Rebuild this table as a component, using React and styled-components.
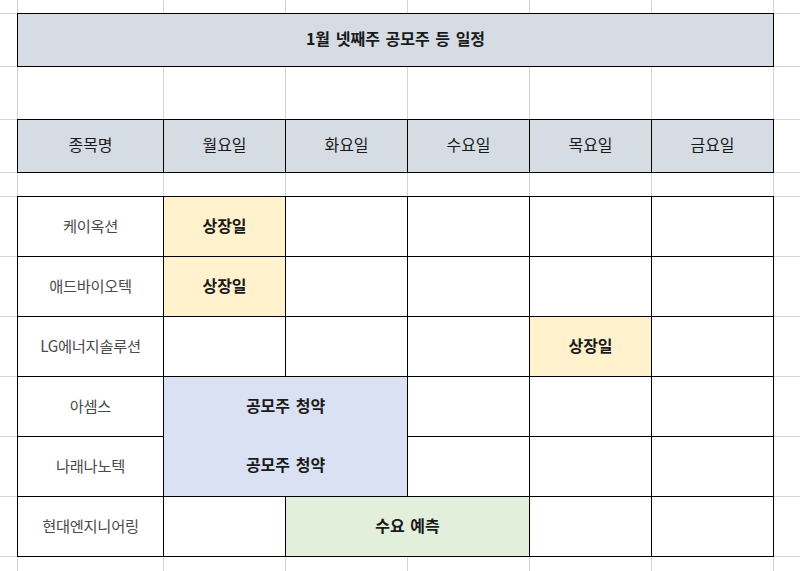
import React from "react";
import styled, { createGlobalStyle } from "styled-components";

const GlobalStyle = createGlobalStyle`
  html, body { margin: 0; padding: 0; background: #fff; }
  body {
    font-family: "Noto Sans CJK KR", "Noto Sans", "Liberation Sans", sans-serif;
    color: #222;
  }
`;

const GRID = "#d4d4d4";

const Sheet = styled.div`
  display: grid;
  grid-template-columns: 17px 146px repeat(5, 122px) 1fr;
  grid-template-rows: 13px repeat(3, 53px) 24px repeat(6, 60px) 1fr;
  width: 100vw;
  height: 100vh;
  overflow: hidden;
`;

const Blank = styled.div`
  grid-column: ${p => p.$c};
  grid-row: ${p => p.$r};
  border-left: ${p => (p.$c > 1 ? `1px solid ${GRID}` : "none")};
  border-top: ${p => (p.$r > 1 ? `1px solid ${GRID}` : "none")};
`;

const Cell = styled.div`
  grid-column: ${p => p.$c} / span ${p => p.$span || 1};
  grid-row: ${p => p.$r} / span ${p => p.$rows || 1};
  border: 1px solid #000;
  margin: 0 -1px -1px 0;
  background: ${p => p.$bg || "#fff"};
  display: flex;
  flex-direction: column;
  z-index: 1;
`;

const sizes = { title: 16, head: 16, event: 16, name: 15.3 };

const Label = styled.div`
  flex: 1;
  display: flex;
  align-items: center;
  justify-content: center;
  font-size: ${p => sizes[p.$kind]}px;
  font-weight: ${p => (p.$kind === "title" || p.$kind === "event" ? 700 : 400)};
  color: ${p => (p.$kind === "name" ? "#4a4a4a" : "#1a1a1a")};
  letter-spacing: ${p => (p.$kind === "name" ? "-0.3px" : "0")};
  word-spacing: ${p => (p.$kind === "title" || p.$kind === "event" ? "2px" : "0")};
  padding-bottom: 4px;
`;

const COLORS = {
  head: "#d6dce4",
  listing: "#fff2cc",
  subscribe: "#dae1f3",
  demand: "#e2efda",
};

const days = ["월요일", "화요일", "수요일", "목요일", "금요일"];
const names = ["케이옥션", "애드바이오텍", "LG에너지솔루션", "아셈스", "나래나노텍", "현대엔지니어링"];

const events = [
  { r: 6, c: 3, span: 1, rows: 1, kind: "listing", labels: ["상장일"] },
  { r: 7, c: 3, span: 1, rows: 1, kind: "listing", labels: ["상장일"] },
  { r: 8, c: 6, span: 1, rows: 1, kind: "listing", labels: ["상장일"] },
  { r: 9, c: 3, span: 2, rows: 2, kind: "subscribe", labels: ["공모주 청약", "공모주 청약"] },
  { r: 11, c: 4, span: 2, rows: 1, kind: "demand", labels: ["수요 예측"] },
];

export default function App() {
  const blanks = [];
  for (let r = 1; r <= 12; r++) {
    for (let c = 1; c <= 8; c++) {
      blanks.push(<Blank key={`b${r}-${c}`} $r={r} $c={c} />);
    }
  }

  const taken = new Set();
  events.forEach(e => {
    for (let r = e.r; r < e.r + e.rows; r++)
      for (let c = e.c; c < e.c + e.span; c++) taken.add(`${r}-${c}`);
  });

  const empties = [];
  for (let r = 6; r <= 11; r++) {
    for (let c = 3; c <= 7; c++) {
      if (!taken.has(`${r}-${c}`)) empties.push(<Cell key={`e${r}-${c}`} $r={r} $c={c} />);
    }
  }

  return (
    <>
      <GlobalStyle />
      <Sheet>
        {blanks}

        <Cell $r={2} $c={2} $span={6} $bg={COLORS.head}>
          <Label $kind="title">1월 넷째주 공모주 등 일정</Label>
        </Cell>

        <Cell $r={4} $c={2} $bg={COLORS.head}>
          <Label $kind="head">종목명</Label>
        </Cell>
        {days.map((d, i) => (
          <Cell key={d} $r={4} $c={3 + i} $bg={COLORS.head}>
            <Label $kind="head">{d}</Label>
          </Cell>
        ))}

        {names.map((n, i) => (
          <Cell key={n} $r={6 + i} $c={2}>
            <Label $kind="name">{n}</Label>
          </Cell>
        ))}

        {empties}

        {events.map((e, i) => (
          <Cell key={`ev${i}`} $r={e.r} $c={e.c} $span={e.span} $rows={e.rows} $bg={COLORS[e.kind]}>
            {e.labels.map((l, j) => (
              <Label key={j} $kind="event">{l}</Label>
            ))}
          </Cell>
        ))}
      </Sheet>
    </>
  );
}
